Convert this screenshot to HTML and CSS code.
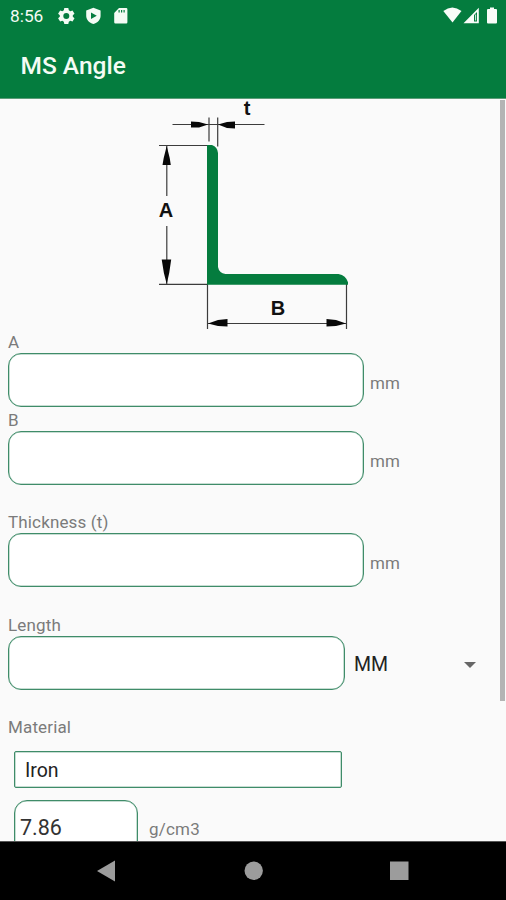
FILE: index.html
```html
<!DOCTYPE html>
<html lang="en">
<head>
<meta charset="utf-8">
<title>MS Angle</title>
<link rel="stylesheet" href="styles.css">
</head>
<body>
<div class="screen">
  <header class="header">
    <div class="status">
      <span class="clock">8:56</span>
      <svg class="status-left" viewBox="56 4 76 24" width="76" height="24" fill="#f4fbf4">
        <path fill-rule="evenodd" d="M64.300 8h4l.5 2.300 1.500.9 2.200-.8 2 3.300-1.700 1.500v1.600l1.700 1.500-2 3.300-2.200-.8-1.500.9-.5 2.300h-4l-.5-2.300-1.500-.9-2.200.8-2-3.300 1.700-1.500v-1.600l-1.700-1.500 2-3.300 2.200.8 1.500-.9zM66.300 13a3 3 0 1 0 0 6a3 3 0 1 0 0-6z"/>
        <path fill-rule="evenodd" d="M93.400 7.700l7.200 2.700v5.300c0 4-3 7-7.200 8.300c-4.200-1.300-7.200-4.300-7.200-8.300v-5.300zM91 12.500v6.500l5.800-3.200z"/>
        <path fill-rule="evenodd" d="M119 8h7.200q1.200 0 1.200 1.200v13q0 1.200-1.200 1.200h-10.800q-1.200 0-1.200-1.200v-9.300zM118.500 10v2.500h1.200v-2.500zM121 10v2.500h1.200v-2.500zM123.500 10v2.500h1.200v-2.500z"/>
      </svg>
      <svg class="status-right" viewBox="442 4 58 24" width="58" height="24" fill="#f8fcf8">
        <path d="M443.300 11q9-7.200 18.200 0l-9 11.600z"/>
        <path fill-rule="evenodd" d="M463.500 23.300l15.300-15.600v15.600zM474 15v6.500h3v-9.600z"/>
        <path d="M475.200 14.500h.9v6h-.9zM490 7.500h4v1.500h2q1 0 1 1v12.500q0 1-1 1h-8q-1 0-1-1v-12.500q0-1 1-1h2z"/>
      </svg>
    </div>
    <h1 class="title">MS Angle</h1>
  </header>

  <main class="content">
    <svg class="diagram" viewBox="150 100 210 233" width="210" height="233">
      <g stroke="#3c3c3c" stroke-width="1.2" fill="none">
        <path d="M172.500 125.500h92M209 118.500v24M217.700 118.500v29"/>
        <path d="M159 146.500h49M159 285.300h49M166.800 147v50M166.800 227v58"/>
        <path d="M207.500 285v45M346.500 285v45M208 324.500h138"/>
      </g>
      <path fill="#047c3e" d="M207 146h5q5.500 2 6 8v114q1 6 7.500 7h113q7.500 1.500 9.500 8.300v2.500h-141z"/>
      <g fill="#080808">
        <path d="M208 125.500l-9-2.500-8-.5v6l8 0zM218 125.500l9-2.500 8-.5v7l-8-.5z"/>
        <path d="M166.700 147l3 12 1.100 7h-8.300l1.200-7zM166.700 285l2.500-11 2-13.500h-9.500l2.200 13.500z"/>
        <path d="M208 324.500l10-3.500 9.500-1v7.500l-9.500-.5zM346 324.500l-10-3.500-9.500-1v7.500l9.500-.5z"/>
      </g>
      <g class="dimension">
        <text x="247" y="116">t</text>
        <text x="166" y="218">A</text>
        <text x="278" y="316.300">B</text>
      </g>
    </svg>

    <form class="form">
      <div class="field">
        <label for="a">A</label>
        <div class="row"><input id="a" class="input" type="text"><span class="unit">mm</span></div>
      </div>
      <div class="field spaced">
        <label for="b">B</label>
        <div class="row"><input id="b" class="input" type="text"><span class="unit">mm</span></div>
      </div>
      <div class="field spaced">
        <label for="t">Thickness (t)</label>
        <div class="row"><input id="t" class="input" type="text"><span class="unit">mm</span></div>
      </div>
      <div class="field spaced">
        <label for="l">Length</label>
        <div class="row">
          <input id="l" class="input length" type="text">
          <div class="spinner"><span>MM</span><i class="caret"></i></div>
        </div>
      </div>
      <div class="material">
        <label>Material</label>
        <div class="select">Iron</div>
        <div class="row"><div class="input density">7.86</div><span class="unit density-unit">g/cm3</span></div>
      </div>
    </form>
    <div class="scrollbar"></div>
  </main>

  <nav class="nav">
    <svg viewBox="0 0 506 59" width="506" height="59" fill="#9c9c9c">
      <path d="M97 30l18-10.500v21z"/>
      <circle cx="253.700" cy="29.700" r="9.200"/>
      <rect x="390" y="20.500" width="18.500" height="18.500"/>
    </svg>
  </nav>
</div>
</body>
</html>
```
FILE: styles.css
```css
* { box-sizing: border-box; }

body {
  margin: 0;
  font-family: Roboto, sans-serif;
  background: #fafafa;
}

.screen {
  width: 506px;
  height: 900px;
  display: flex;
  flex-direction: column;
  overflow: hidden;
}

.header {
  flex: 0 0 99px;
  background: #047c3e;
  border-bottom: 1px solid #5c9c78;
  color: #f4fbf4;
}

.status {
  height: 32px;
  display: flex;
  align-items: center;
  padding: 0 6px 0 10px;
}

.clock {
  width: 46px;
  font-size: 17.3px;
}

.status-right { margin-left: auto; }

.title {
  margin: 0;
  padding-left: 20.5px;
  height: 66px;
  line-height: 68px;
  font-size: 24.5px;
  font-weight: 500;
}

.content {
  position: relative;
  flex: 1;
  min-height: 0;
  overflow: hidden;
}

.diagram {
  display: block;
  margin-left: 150px;
  overflow: visible;
}

.dimension {
  font: bold 20px "Liberation Sans", sans-serif;
  fill: #111;
  text-anchor: middle;
}

.form { padding-left: 8px; }

.field { height: 78px; }

.field.spaced { height: 102.500px; }

label {
  display: block;
  height: 21px;
  line-height: 21px;
  font-size: 17px;
  letter-spacing: 0.15px;
  color: #7b7b7b;
}

.row {
  display: flex;
  align-items: center;
}

.input {
  width: 356px;
  height: 54px;
  padding: 0 5px;
  border: 1.500px solid #3f8c69;
  border-radius: 13px;
  background: #fff;
  outline: 0;
  box-shadow: inset 0 0 0 0.500px #8fbca7;
}

.field:first-child,
.field:first-child + .field { margin-top: 0; }

.input.length { width: 337px; }

.unit {
  margin: 6px 0 0 6px;
  font-size: 17px;
  letter-spacing: 0.2px;
  color: #7b7b7b;
}

.form { margin-top: -0.5px; }

.spinner {
  width: 122px;
  margin: 4px 0 0 9px;
  display: flex;
  align-items: center;
  justify-content: space-between;
  font-size: 19.500px;
  color: #222;
}

.caret {
  border: 6px solid transparent;
  border-top-color: #666;
  border-bottom: 0;
}

.select {
  width: 328px;
  height: 37px;
  margin: 12.500px 0 12px 6px;
  padding-left: 10px;
  border: 1.500px solid #3f8c69;
  border-radius: 2px;
  background: #fff;
  box-shadow: inset 0 0 0 0.500px #8fbca7;
  line-height: 37px;
  font-size: 19.500px;
  color: #222;
}

.input.density {
  width: 124px;
  margin-left: 6px;
  line-height: 54px;
  font-size: 21.500px;
  color: #333;
}

.density-unit { margin: 5px 0 0 11px; }

.scrollbar {
  position: absolute;
  top: 1px;
  right: 1px;
  width: 5px;
  height: 601px;
  background: #b4b4b4;
}

.nav {
  flex: 0 0 59px;
  background: #000;
  border-top: 1px solid #555;
}

.nav svg {
  display: block;
  margin-top: -1px;
}
```
